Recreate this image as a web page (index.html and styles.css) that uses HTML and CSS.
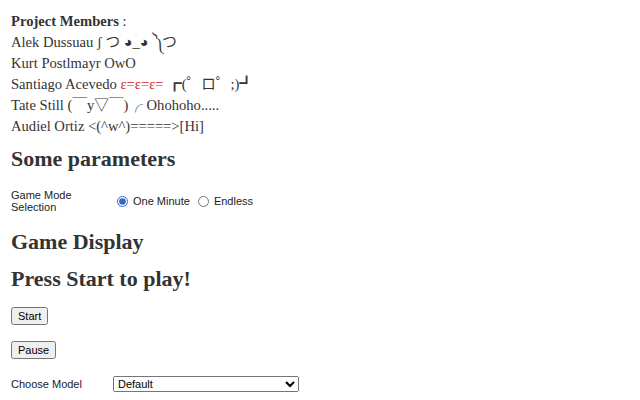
FILE: index.html
```html
<!DOCTYPE html>
<html>
<head>
<meta charset="utf-8">
<link rel="stylesheet" href="styles.css">
</head>
<body>
<div class="members">
  <div><b>Project Members</b> :</div>
  <div>Alek Dussuau ʃ つ ◕_◕ ༽つ</div>
  <div>Kurt Postlmayr OwO</div>
  <div>Santiago Acevedo <span class="red">ε=ε=ε=</span> ┏(゜ロ゜;)┛</div>
  <div>Tate Still (￣y▽￣)╭ Ohohoho.....</div>
  <div>Audiel Ortiz &lt;(^w^)=====&gt;[Hi]</div>
</div>
<h2 class="params">Some parameters</h2>
<div class="row">
  <div class="label">Game Mode<br>Selection</div>
  <label class="opt"><input type="radio" name="mode" checked> One Minute</label>
  <label class="opt"><input type="radio" name="mode"> Endless</label>
</div>
<h2 class="display">Game Display</h2>
<h2 class="press">Press Start to play!</h2>
<div class="btnrow"><button>Start</button></div>
<div class="btnrow"><button>Pause</button></div>
<div class="row model">
  <div class="label short">Choose Model</div>
  <select><option>Default</option></select>
</div>
</body>
</html>
```
FILE: styles.css
```css
body {
  margin: 0;
  padding: 11px 11px;
  font-family: "Liberation Serif", "Noto Sans CJK JP", serif;
  font-size: 14.6px;
  color: #333;
  background: #fff;
}
.members div {
  line-height: 21px;
}
.red { color: #e0201c; }
h2 {
  font-size: 22px;
  line-height: 24px;
  margin: 0;
}
h2.params { margin: 10px 0 18px; }
h2.display { margin: 17px 0 13px; }
h2.press { margin: 0 0 16px; }
.row {
  display: flex;
  align-items: center;
  font-family: "Liberation Sans", Arial, sans-serif;
  font-size: 11px;
  color: #222;
}
.label {
  width: 104px;
  line-height: 12px;
}
.label.short { width: 102px; }
.opt {
  display: flex;
  align-items: center;
  margin-right: 6px;
}
.opt input {
  margin: 0 5px 0 2px;
  width: 11px;
  height: 11px;
  accent-color: #3b66c4;
}
.btnrow { margin: 0 0 16px; }
.model { margin-top: 17px; }
button {
  font-family: "Liberation Sans", Arial, sans-serif;
  font-size: 11px;
  padding: 1px 5px;
}
select {
  width: 186px;
  height: 16px;
  font-family: "Liberation Sans", Arial, sans-serif;
  font-size: 11px;
  padding: 0;
}
```
